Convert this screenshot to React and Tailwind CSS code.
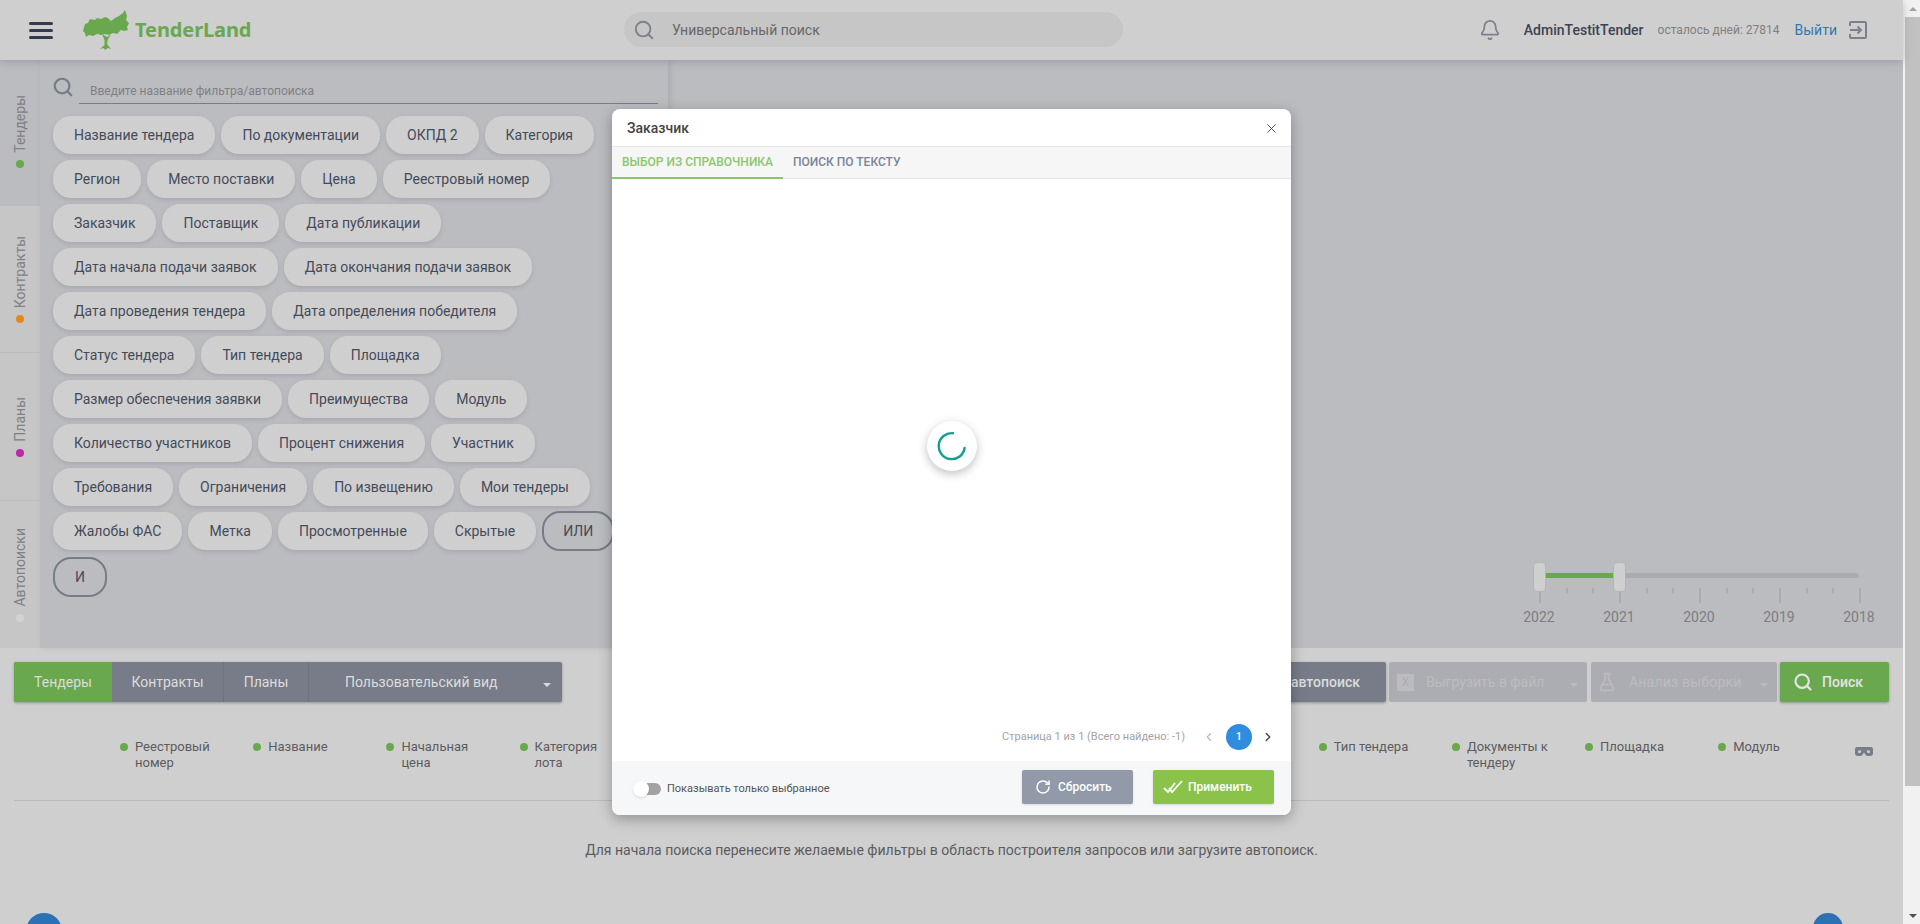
import React from 'react';
import { Search, Bell, RotateCw, FlaskConical, ChevronLeft, ChevronRight, X } from 'lucide-react';

const chips = [
  'Название тендера', 'По документации', 'ОКПД 2', 'Категория',
  'Регион', 'Место поставки', 'Цена', 'Реестровый номер',
  'Заказчик', 'Поставщик', 'Дата публикации',
  'Дата начала подачи заявок', 'Дата окончания подачи заявок',
  'Дата проведения тендера', 'Дата определения победителя',
  'Статус тендера', 'Тип тендера', 'Площадка',
  'Размер обеспечения заявки', 'Преимущества', 'Модуль',
  'Количество участников', 'Процент снижения', 'Участник',
  'Требования', 'Ограничения', 'По извещению', 'Мои тендеры',
  'Жалобы ФАС', 'Метка', 'Просмотренные', 'Скрытые',
];

const sideTabs = [
  { label: 'Тендеры', dot: 'bg-[#6aa84f]', bg: 'bg-[#bbbcc0]', box: 'h-[145px] pb-[37px]' },
  { label: 'Контракты', dot: 'bg-[#e08a1e]', bg: 'bg-[#c6c6c7]', box: 'h-[146px] pb-[29px]' },
  { label: 'Планы', dot: 'bg-[#c026a8]', bg: 'bg-[#c6c6c7]', box: 'h-[147px] pb-[43px]' },
  { label: 'Автопоиски', dot: 'bg-[#d2d2d4]', bg: 'bg-[#c6c6c7]', box: 'h-[147px] pb-[26px]' },
];

const columns = [
  'Реестровый номер', 'Название', 'Начальная цена', 'Категория лота',
  '', '', '', '', '',
  'Тип тендера', 'Документы к тендеру', 'Площадка', 'Модуль',
];

const years = ['2022', '2021', '2020', '2019', '2018'];
const minorTicks = [1566, 1592, 1646, 1672, 1726, 1752, 1806, 1832];

function Logo() {
  return (
    <svg width="46" height="40" viewBox="0 0 46 40" className="shrink-0">
      <path
        fill="#6aa84f"
        d="M0 21 L2 14 L5 13 L7 9 L12 10 L14 8 L18 9 L22 7 L25 8 L28 11 L32 8 L36 6 L40 3 L42 0 L44 6 L43 10 L46 13 L44 17 L45 20 L41 21 L38 20 L34 24 L30 23 L26 25 L22 24 L18 25 L14 24 L10 26 L6 25 L3 27 L2 23 Z"
      />
      <path fill="#6aa84f" d="M19 24 L21.5 30 L21.5 35 L17 39 L20.5 38 L22 40 L25 38 L28 39 L24 34 L25 29 L28 25 L24 27 Z" />
    </svg>
  );
}

function ExitIcon() {
  return (
    <svg width="18" height="18" viewBox="0 0 18 18" fill="none" stroke="#7a808c" strokeWidth="2">
      <path d="M1 5 V2 a1 1 0 0 1 1 -1 H16 a1 1 0 0 1 1 1 V16 a1 1 0 0 1 -1 1 H2 a1 1 0 0 1 -1 -1 V13" />
      <path d="M1 9 H12 M8.5 5.5 L12 9 L8.5 12.5" />
    </svg>
  );
}

function DoubleCheck() {
  return (
    <svg width="20" height="14" viewBox="0 0 20 14" fill="none" stroke="#ffffff" strokeWidth="1.8">
      <path d="M1 8 L5 12 L12 3" />
      <path d="M6 8 L9 12 L19 1" />
    </svg>
  );
}

function MaskIcon() {
  return (
    <svg width="18" height="10" viewBox="0 0 18 10">
      <path
        fill="#777c88"
        fillRule="evenodd"
        d="M2 0 H16 a2 2 0 0 1 2 2 V6 a3 3 0 0 1 -3 3 H13 a3 3 0 0 1 -3 -2 L9 5.5 L8 7 a3 3 0 0 1 -3 2 H3 a3 3 0 0 1 -3 -3 V2 a2 2 0 0 1 2 -2 Z M3 3.5 V5 a1 1 0 0 0 1 1 H5.5 L6.5 3.5 Z M15 3.5 V5 a1 1 0 0 1 -1 1 H12.5 L11.5 3.5 Z"
      />
    </svg>
  );
}

function Caret({ color }) {
  return <span className={`inline-block w-0 h-0 border-x-[4px] border-x-transparent border-t-[4px] ${color}`} />;
}

function YearSlider() {
  // отсчёт от левого края полосы фильтров
  const base = 1533;
  return (
    <div className="relative w-[370px] h-[80px] mt-[502px] ml-auto">
      <div className="absolute left-[12px] top-[11px] w-[314px] h-[5px] rounded-sm bg-[#a9abb3]" />
      <div className="absolute left-[12px] top-[11px] w-[70px] h-[5px] bg-[#6aa84f]" />
      {years.map((y, i) => (
        <div key={y} className="absolute w-[1.5px] h-[15px] top-[26px] bg-[#a9abb3]" style={{ left: 6 + i * 80 }} />
      ))}
      {minorTicks.map((x) => (
        <div key={x} className="absolute w-[1.5px] h-[5px] top-[26px] bg-[#a9abb3]" style={{ left: x - base }} />
      ))}
      <div className="absolute left-0 top-0 w-[13px] h-[30px] rounded-sm bg-[#cfcfcf] border border-[#b4b5b9]" />
      <div className="absolute left-[80px] top-0 w-[13px] h-[30px] rounded-sm bg-[#cfcfcf] border border-[#b4b5b9]" />
      {years.map((y, i) => (
        <span key={y} className="absolute top-[47px] w-[40px] text-center text-sm leading-4 text-[#7d7e82]" style={{ left: -14 + i * 80 }}>
          {y}
        </span>
      ))}
    </div>
  );
}

function Modal() {
  return (
    <div className="absolute z-20 left-[612px] top-[109px] w-[679px] h-[706px] flex flex-col rounded-[8px] bg-white shadow-[0_4px_14px_rgba(0,0,0,0.3)] overflow-hidden">
      <div className="h-[37px] shrink-0 flex items-center justify-between pl-[15px] pr-[12px] pt-[1px]">
        <span className="text-sm font-medium text-[#444]">Заказчик</span>
        <X size={15} strokeWidth={1.5} color="#444" />
      </div>
      <div className="h-[33px] shrink-0 flex bg-[#f6f6f6] border-y border-[#e4e4e4]">
        <div className="w-[171px] -mb-px border-b-2 border-[#8bc76b] pl-[10px] pt-[7px] text-xs font-medium uppercase text-[#8bc76b] whitespace-nowrap">
          Выбор из справочника
        </div>
        <div className="pl-[10px] pt-[7px] text-xs font-medium uppercase text-[#7a8499] whitespace-nowrap">
          Поиск по тексту
        </div>
      </div>
      <div className="flex-1 relative flex flex-col justify-end">
        <div className="absolute left-[315px] top-[242px] w-[50px] h-[50px] rounded-full bg-white flex items-center justify-center shadow-[0_3px_10px_rgba(0,0,0,0.25)]">
          <svg width="30" height="30" viewBox="0 0 30 30" fill="none" stroke="#13a08c" strokeWidth="2.4" strokeLinecap="round">
            <path d="M16 2.2 A13 13 0 1 0 27.6 17" />
          </svg>
        </div>
        <div className="h-[38px] mb-[5px] flex items-center justify-end pr-[16px] text-[11px] text-[#a3a3a3]">
          <span className="mr-[17px]">Страница 1 из 1 (Всего найдено: -1)</span>
          <ChevronLeft size={14} color="#b8b8b8" className="mr-[10px]" />
          <span className="w-[26px] h-[26px] rounded-full bg-[#2f8cde] text-white text-[11px] font-medium flex items-center justify-center mr-[9px]">1</span>
          <ChevronRight size={14} color="#444" strokeWidth={2.4} />
        </div>
      </div>
      <div className="h-[54px] shrink-0 flex items-center bg-[#f6f7f9] pl-[22px] pr-[17px]">
        <span className="relative w-[27px] h-[12px] mt-[2px] rounded-full bg-[#a2a2a2] mr-[6px]">
          <span className="absolute -left-px -top-[2px] w-[16px] h-[16px] rounded-full bg-white shadow-sm" />
        </span>
        <span className="mt-[2px] text-[11px] text-[#555]">Показывать только выбранное</span>
        <button className="ml-auto h-[34px] w-[111px] -mt-[3px] flex items-center pl-[13px] gap-[7px] rounded-[2px] bg-[#929aaa] text-white text-xs font-medium shadow-sm">
          <RotateCw size={16} strokeWidth={2.2} />
          Сбросить
        </button>
        <button className="ml-[20px] h-[34px] w-[121px] -mt-[3px] flex items-center pl-[10px] gap-[5px] rounded-[2px] bg-[#8bc34a] text-white text-xs font-medium shadow-sm">
          <DoubleCheck />
          Применить
        </button>
      </div>
    </div>
  );
}

export default function App() {
  return (
    <div className="relative h-[924px] flex overflow-hidden font-['Roboto',sans-serif] bg-[#cfcfcf]">
      <main className="w-[1903px] shrink-0 flex flex-col">
        <header className="relative z-10 h-[60px] shrink-0 flex items-center bg-[#cfcfcf] shadow-[0_2px_8px_rgba(100,100,115,0.35)]">
          <div className="ml-[29px] w-[24px] flex flex-col gap-[4px]">
            <span className="h-[3px] bg-[#333a4c] rounded-sm" />
            <span className="h-[3px] bg-[#333a4c] rounded-sm" />
            <span className="h-[3px] bg-[#333a4c] rounded-sm" />
          </div>
          <div className="ml-[30px] flex items-center gap-[6px]">
            <Logo />
            <span className="font-['Noto_Sans',sans-serif] font-bold text-[20px] tracking-[-0.1px] text-[#6aa84f]">TenderLand</span>
          </div>
          <div className="absolute left-[624px] top-[12px] w-[499px] h-[35px] rounded-full bg-[#c6c6c7] flex items-center pl-[9px]">
            <Search size={22} color="#7a808c" strokeWidth={2} />
            <span className="ml-[17px] text-sm text-[#666]">Универсальный поиск</span>
          </div>
          <div className="ml-auto flex items-center mr-[36px]">
            <Bell size={22} color="#7a808c" strokeWidth={1.9} />
            <span className="ml-[23px] text-sm font-medium text-[#3c4254]">AdminTestitTender</span>
            <span className="ml-[14px] text-xs text-[#808080]">осталось дней: 27814</span>
            <span className="ml-[15px] text-sm text-[#2f78b5]">Выйти</span>
            <span className="ml-[12px]"><ExitIcon /></span>
          </div>
        </header>

        <section className="h-[588px] shrink-0 flex bg-[#bbbcc0]">
          <nav className="w-[40px] shrink-0 flex flex-col gap-px">
            {sideTabs.map((t) => (
              <div key={t.label} className={`shrink-0 flex flex-col items-center justify-end ${t.box} ${t.bg}`}>
                <span className="[writing-mode:vertical-rl] rotate-180 text-sm text-[#808084] whitespace-nowrap">{t.label}</span>
                <span className={`mt-[7px] w-[8px] h-[8px] rounded-full ${t.dot}`} />
              </div>
            ))}
          </nav>
          <div className="w-[628px] shrink-0 pl-[13px] shadow-[2px_0_6px_rgba(100,100,115,0.2)]">
            <div className="flex items-center h-[56px] pt-[6px]">
              <Search size={22} color="#777c88" strokeWidth={2.4} className="-mt-[8px] -ml-px" />
              <div className="ml-[5px] w-[579px] h-[25px] border-b border-[#777c88] pl-[11px] text-xs leading-[25px] text-[#808084]">
                Введите название фильтра/автопоиска
              </div>
            </div>
            <div className="w-[597px] flex flex-wrap gap-x-[6px] gap-y-[6px]">
              {chips.map((c) => (
                <span key={c} className="h-[38px] px-[21px] flex items-center rounded-[18px] bg-[#cfcfcf] text-sm text-[#444a5a] shadow-[0_2px_4px_rgba(90,90,105,0.2)] whitespace-nowrap">
                  {c}
                </span>
              ))}
              <span className="h-[40px] -mt-px w-[72px] flex items-center justify-center rounded-[18px] border-2 border-[#777c88] text-sm text-[#444a5a]">ИЛИ</span>
              <span className="h-[40px] w-[54px] flex items-center justify-center rounded-[18px] border-2 border-[#777c88] text-sm text-[#444a5a]">И</span>
            </div>
          </div>
          <div className="flex-1">
            <YearSlider />
          </div>
        </section>

        <div className="mt-[14px] mx-[14px] h-[40px] shrink-0 flex justify-between text-sm">
          <div className="flex rounded-[2px] overflow-hidden bg-[#777c88] text-[#dcdcdc] shadow-[0_1px_3px_rgba(0,0,0,0.3)]">
            <span className="w-[98px] flex items-center justify-center bg-[#6aa84f]">Тендеры</span>
            <span className="w-[112px] flex items-center justify-center border-r border-[#6d727e]">Контракты</span>
            <span className="w-[85px] flex items-center justify-center border-r border-[#6d727e]">Планы</span>
            <span className="w-[253px] flex items-center pl-[36px]">
              Пользовательский вид
              <span className="ml-[45px]"><Caret color="border-t-[#dcdcdc]" /></span>
            </span>
          </div>
          <div className="flex">
            <span className="w-[150px] flex items-center justify-end pr-[26px] rounded-[2px] bg-[#777c88] text-[#dcdcdc] font-medium shadow-[0_1px_3px_rgba(0,0,0,0.3)]">автопоиск</span>
            <span className="ml-[3px] w-[198px] flex items-center pl-[8px] rounded-[2px] bg-[#acadb2] text-[#bcbcc0]">
              <span className="w-[17px] h-[17px] flex items-center justify-center bg-[#bcbcc0] text-[#acadb2] text-xs">X</span>
              <span className="ml-[12px]">Выгрузить в файл</span>
              <span className="ml-auto mr-[9px]"><Caret color="border-t-[#bcbcc0]" /></span>
            </span>
            <span className="ml-[4px] w-[186px] flex items-center pl-[6px] rounded-[2px] bg-[#acadb2] text-[#bcbcc0]">
              <FlaskConical size={20} strokeWidth={2} />
              <span className="ml-[12px] tracking-[0.2px]">Анализ выборки</span>
              <span className="ml-auto mr-[9px]"><Caret color="border-t-[#bcbcc0]" /></span>
            </span>
            <span className="ml-[3px] w-[109px] flex items-center pl-[13px] rounded-[2px] bg-[#6aa84f] text-[#e4e4e4] font-medium shadow-[0_1px_3px_rgba(0,0,0,0.3)]">
              <Search size={20} strokeWidth={2.6} />
              <span className="ml-[9px]">Поиск</span>
            </span>
          </div>
        </div>

        <div className="relative h-[61px] mt-[37px] shrink-0 flex pl-[120px] text-[13px] leading-4 text-[#5c5c60]">
          {columns.map((c, i) => (
            <div key={i} className="w-[133.2px] shrink-0 flex">
              {c && <span className="mt-[4px] w-[8px] h-[8px] rounded-full bg-[#6aa84f]" />}
              {c && <span className="ml-[7px] w-[85px]">{c}</span>}
            </div>
          ))}
          <span className="absolute left-[1855px] top-[8px]"><MaskIcon /></span>
        </div>

        <div className="mx-[14px] h-px shrink-0 bg-[#b9b9bb]" />
        <p className="mt-[41px] text-center text-sm leading-4 text-[#5c5c60]">
          Для начала поиска перенесите желаемые фильтры в область построителя запросов или загрузите автопоиск.
        </p>
        <div className="mt-[55px] flex justify-between pl-[26px] pr-[60px]">
          <span className="w-[36px] h-[36px] rounded-full bg-[#2a72b5]" />
          <span className="w-[30px] h-[30px] rounded-full bg-[#2a72b5]" />
        </div>
      </main>

      <aside className="w-[17px] shrink-0 flex flex-col bg-[#f1f1f1] pl-[2px]">
        <div className="h-[17px] flex items-center justify-center">
          <span className="w-0 h-0 border-x-[4px] border-x-transparent border-b-[4px] border-b-[#a3a3a3]" />
        </div>
        <div className="h-[769px] bg-[#c1c1c1]" />
        <div className="mt-auto h-[17px] flex items-center justify-center">
          <span className="w-0 h-0 border-x-[4px] border-x-transparent border-t-[4px] border-t-[#505050]" />
        </div>
      </aside>

      <Modal />
    </div>
  );
}
